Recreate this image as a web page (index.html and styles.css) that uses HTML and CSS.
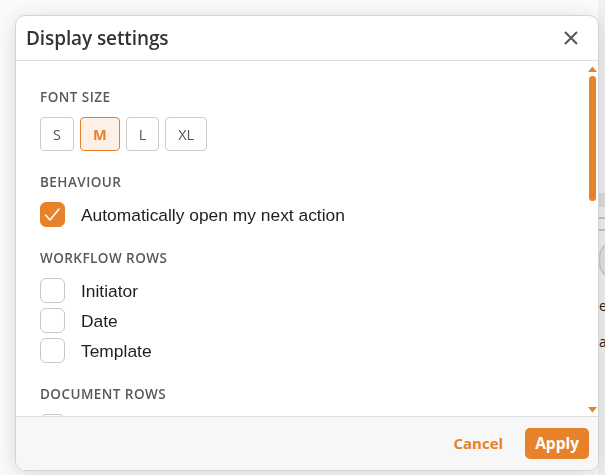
FILE: index.html
```html
<!DOCTYPE html>
<html lang="en">
<head>
<meta charset="utf-8">
<title>Display settings</title>
<link rel="stylesheet" href="styles.css">
</head>
<body>
<div class="page">
  <div class="page-strip">
    <div class="strip-band"></div>
    <div class="strip-line"></div>
    <div class="strip-line"></div>
    <div class="strip-avatar"></div>
    <div class="strip-text">e</div>
    <div class="strip-text">a</div>
  </div>
</div>

<div class="modal" role="dialog" aria-labelledby="modal-title">
  <header class="modal-header">
    <h2 id="modal-title" class="modal-title">Display settings</h2>
    <button class="close-btn" aria-label="Close">
      <svg width="14" height="14" viewBox="0 0 14 14"><path d="M1 1L13 13M13 1L1 13" stroke="#555" stroke-width="2" fill="none"/></svg>
    </button>
  </header>

  <div class="modal-body">
    <div class="modal-content">
      <section class="group">
        <h3 class="group-label">Font size</h3>
        <div class="size-options">
          <button class="size-btn">S</button>
          <button class="size-btn active">M</button>
          <button class="size-btn">L</button>
          <button class="size-btn">XL</button>
        </div>
      </section>

      <section class="group">
        <h3 class="group-label">Behaviour</h3>
        <label class="check-row">
          <span class="check checked">
            <svg width="25" height="25" viewBox="0 0 25 25"><path d="M5.5 13L10 18L19 7" stroke="#fff" stroke-width="1.6" fill="none" stroke-linecap="round" stroke-linejoin="round"/></svg>
          </span>
          <span class="check-text">Automatically open my next action</span>
        </label>
      </section>

      <section class="group">
        <h3 class="group-label">Workflow rows</h3>
        <div class="check-list">
          <label class="check-row"><span class="check"></span><span class="check-text">Initiator</span></label>
          <label class="check-row"><span class="check"></span><span class="check-text">Date</span></label>
          <label class="check-row"><span class="check"></span><span class="check-text">Template</span></label>
        </div>
      </section>

      <section class="group">
        <h3 class="group-label">Document rows</h3>
        <div class="check-list">
          <label class="check-row"><span class="check"></span><span class="check-text">Owner</span></label>
          <label class="check-row"><span class="check"></span><span class="check-text">Modified</span></label>
        </div>
      </section>
    </div>

    <div class="scrollbar" aria-hidden="true">
      <svg class="scroll-arrow up" width="9" height="6" viewBox="0 0 9 6"><path d="M0 6L4.5 0.5L9 6Z" fill="#e8822a"/></svg>
      <div class="scroll-thumb"></div>
      <svg class="scroll-arrow down" width="9" height="6" viewBox="0 0 9 6"><path d="M0 0L4.5 5.5L9 0Z" fill="#e8822a"/></svg>
    </div>
  </div>

  <footer class="modal-footer">
    <button class="btn-link">Cancel</button>
    <button class="btn-primary">Apply</button>
  </footer>
</div>
</body>
</html>
```

FILE: styles.css
```css
* {
  box-sizing: border-box;
}

html, body {
  margin: 0;
  padding: 0;
}

body {
  width: 605px;
  height: 475px;
  overflow: hidden;
  background: #fbfbfb;
  font-family: "Open Sans", "Noto Sans", sans-serif;
}

/* page behind the modal */
.page {
  height: 475px;
  display: flex;
  justify-content: flex-end;
}

.page-strip {
  width: 7px;
  padding-top: 193px;
  background: #f1f1f1;
  display: flex;
  flex-direction: column;
}

.strip-band {
  height: 14px;
  background: #dcdcdc;
}

.strip-line {
  height: 2px;
  margin-top: 10px;
  background: #c4c4c4;
}

.strip-avatar {
  width: 30px;
  height: 38px;
  margin-top: 10px;
  border: 2px solid #cfcfcf;
  border-radius: 50%;
  background: #e2e2e2;
}

.strip-text {
  font-family: "Open Sans", sans-serif;
  font-size: 14px;
  line-height: 18px;
  color: #222;
  margin-top: 18px;
  padding-left: 1px;
}

/* modal */
.modal {
  position: fixed;
  left: 15px;
  top: 15px;
  width: 584px;
  height: 456px;
  background: #fff;
  border: 1px solid #d4d4d4;
  border-radius: 10px;
  box-shadow: 0 4px 22px rgba(0, 0, 0, 0.14);
  display: flex;
  flex-direction: column;
  overflow: hidden;
}

.modal-header {
  height: 45px;
  flex: none;
  display: flex;
  align-items: center;
  justify-content: space-between;
  padding-left: 10px;
  padding-right: 11px;
  border-bottom: 1px solid #dedede;
}

.modal-title {
  margin: 0;
  font-family: "Open Sans", sans-serif;
  font-size: 19px;
  font-weight: 600;
  letter-spacing: -0.1px;
  color: #333;
}

.close-btn {
  width: 32px;
  height: 32px;
  border: 0;
  padding: 0;
  background: transparent;
  display: flex;
  align-items: center;
  justify-content: center;
}

.modal-body {
  position: relative;
  height: 355px;
  flex: none;
  overflow: hidden;
}

.modal-content {
  padding: 27px 24px 0;
}

.group + .group {
  margin-top: 22px;
}

.group-label {
  margin: 0 0 11px;
  font-size: 13.5px;
  line-height: 18px;
  font-weight: 600;
  letter-spacing: 0.45px;
  text-transform: uppercase;
  color: #595959;
}

.size-options {
  display: flex;
  gap: 6px;
}

.size-btn {
  height: 34px;
  padding: 0 12px;
  border: 1px solid #cdcdcd;
  border-radius: 4px;
  background: #fff;
  font-family: "Open Sans", sans-serif;
  font-size: 14.5px;
  color: #555;
}

.size-btn.active {
  border-color: #e8822a;
  background: #fdf0e6;
  color: #e8822a;
  font-weight: 700;
  padding: 0 12px;
}

.check-list {
  display: flex;
  flex-direction: column;
  gap: 5px;
}

.check-row {
  display: flex;
  align-items: center;
  gap: 16px;
}

.check {
  width: 25px;
  height: 25px;
  flex: none;
  border: 1px solid #c6c6c6;
  border-radius: 6px;
  background: #fff;
  display: flex;
}

.check.checked {
  border-color: #e8822a;
  background: #e8822a;
}

.check.checked svg {
  margin: -1px;
}

.check-text {
  font-family: "Liberation Sans", Arial, sans-serif;
  font-size: 17.4px;
  line-height: 20px;
  color: #1e1e1e;
}

/* custom scrollbar overlay */
.scrollbar {
  position: absolute;
  top: 0;
  right: 0;
  bottom: 0;
  width: 12px;
  display: flex;
  flex-direction: column;
  align-items: center;
  padding: 5px 0 3px;
}

.scroll-thumb {
  width: 7px;
  height: 125px;
  margin-top: 4px;
  border-radius: 4px;
  background: #e8822a;
}

.scroll-arrow.down {
  margin-top: auto;
}

.modal-footer {
  flex: 1;
  display: flex;
  align-items: center;
  justify-content: flex-end;
  gap: 12px;
  padding: 0 9px 1px;
  background: #f7f7f7;
  border-top: 1px solid #dedede;
}

.btn-link {
  border: 0;
  background: transparent;
  padding: 6px 10px;
  font-family: "Open Sans", sans-serif;
  font-size: 15px;
  font-weight: 700;
  color: #e8822a;
}

.btn-primary {
  height: 31px;
  padding: 0 10px;
  border: 0;
  border-radius: 5px;
  background: #e8822a;
  font-family: "Open Sans", sans-serif;
  font-size: 15.5px;
  font-weight: 700;
  color: #fff;
}
```
